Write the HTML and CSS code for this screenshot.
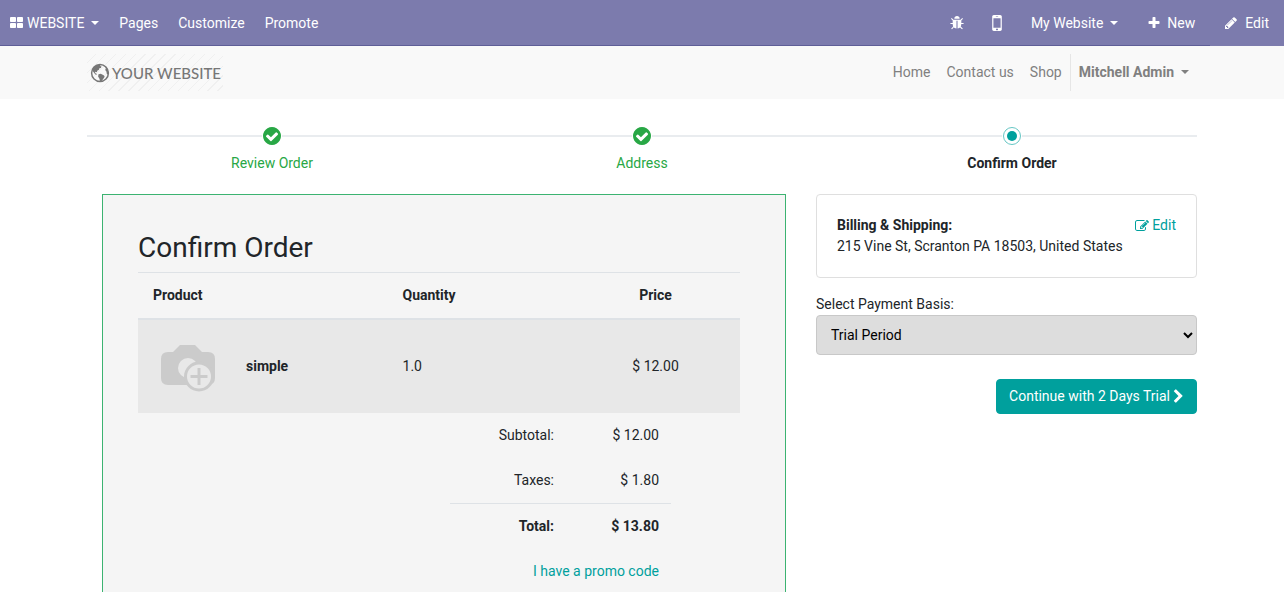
FILE: index.html
```html
<!DOCTYPE html>
<html lang="en">
<head>
<meta charset="utf-8">
<meta name="viewport" content="width=device-width, initial-scale=1">
<title>Confirm Order</title>
<link rel="stylesheet" href="styles.css">
</head>
<body>
<nav class="editor-bar">
  <div class="editor-main">
    <a class="editor-item editor-brand" href="#"><svg class="icon" viewBox="128 0 1792 1792"><path d="M832 1024v384q0 52-38 90t-90 38h-512q-52 0-90-38t-38-90v-384q0-52 38-90t90-38h512q52 0 90 38t38 90zm0-768v384q0 52-38 90t-90 38h-512q-52 0-90-38t-38-90v-384q0-52 38-90t90-38h512q52 0 90 38t38 90zm896 768v384q0 52-38 90t-90 38h-512q-52 0-90-38t-38-90v-384q0-52 38-90t90-38h512q52 0 90 38t38 90zm0-768v384q0 52-38 90t-90 38h-512q-52 0-90-38t-38-90v-384q0-52 38-90t90-38h512q52 0 90 38t38 90z" transform="translate(64 0)"/></svg><span class="caret">WEBSITE</span></a>
    <a class="editor-item" href="#">Pages</a>
    <a class="editor-item" href="#">Customize</a>
    <a class="editor-item" href="#">Promote</a>
    <div class="editor-tools">
      <button class="tool" type="button" aria-label="Debug"><svg class="icon" viewBox="64 64 1664 1664"><path d="M1696 960q0 26-19 45t-45 19h-224q0 171-67 290l208 209q19 19 19 45t-19 45q-18 19-45 19t-45-19l-198-197q-5 5-15 13t-42 28.500-65 36.500-82 29-97 13v-896h-128v896q-51 0-101.500-13.500t-87-33-66-39-43.500-32.500l-15-14-183 207q-20 21-48 21-24 0-43-16-19-18-20.500-44.500t15.500-46.500l202-227q-58-114-58-274h-224q-26 0-45-19t-19-45 19-45 45-19h224v-294l-173-173q-19-19-19-45t19-45 45-19 45 19l173 173h844l173-173q19-19 45-19t45 19 19 45-19 45l-173 173v294h224q26 0 45 19t19 45zm-480-576h-640q0-133 93.500-226.500t226.500-93.500 226.500 93.500 93.500 226.500z"/></svg></button>
      <button class="tool tool-mobile" type="button" aria-label="Mobile preview"><svg class="icon-mobile" viewBox="512 256 768 1280"><path d="M976 1408q0-33-23.500-56.500t-56.500-23.500-56.500 23.500-23.500 56.500 23.500 56.500 56.500 23.500 56.500-23.500 23.500-56.500zm208-160v-704q0-13-9.500-22.500t-22.500-9.500h-512q-13 0-22.500 9.500t-9.500 22.500v704q0 13 9.500 22.500t22.500 9.500h512q13 0 22.500-9.500t9.500-22.500zm-192-848q0-16-16-16h-160q-16 0-16 16t16 16h160q16 0 16-16zm288-16v1024q0 52-38 90t-90 38h-512q-52 0-90-38t-38-90v-1024q0-52 38-90t90-38h512q52 0 90 38t38 90z"/></svg></button>
      <a class="tool tool-site" href="#"><span class="caret">My Website</span></a>
      <a class="tool" href="#"><svg class="icon" viewBox="0 0 1792 1792"><path d="M1600 736v192q0 40-28 68t-68 28h-416v416q0 40-28 68t-68 28h-192q-40 0-68-28t-28-68v-416h-416q-40 0-68-28t-28-68v-192q0-40 28-68t68-28h416v-416q0-40 28-68t68-28h192q40 0 68 28t28 68v416h416q40 0 68 28t28 68z"/></svg>New</a>
    </div>
  </div>
  <a class="tool tool-edit" href="#"><svg class="icon" viewBox="0 0 1792 1792"><path d="M491 1536l91-91-235-235-91 91v107h128v128h107zm523-928q0-22-22-22-10 0-17 7l-542 542q-7 7-7 17 0 22 22 22 10 0 17-7l542-542q7-7 7-17zm-54-192l416 416-832 832h-416v-416zm683 96q0 53-37 90l-166 166-416-416 166-165q36-38 90-38 53 0 91 38l235 234q37 39 37 91z"/></svg>Edit</a>
</nav>

<header class="site-header">
  <div class="container header-row">
    <a class="logo" href="#"><svg class="globe" viewBox="0 0 20 20"><circle cx="10" cy="10" r="8.400" fill="none" stroke="currentColor" stroke-width="1.500"/><path d="M3.200 4.800Q6 1.600 10.500 1.600L10.200 3l1.300.6-.6 1.400-1.600.3-.3 1.500-1.800 1-.2 1.400-1.500-.4-.6 1.300 1.300.5.8 1.200-1.600-.3L2.800 8.200 2 6.800zM8.500 11.200l2.200-.4 3 1.500 1 1.400-1.200 1.800-1.800 2.500-1.800.7-.3-2.800-1.500-2.300zM15.200 3.600l1.800 1.800 1.400 3.200-.2 3.200-1.400-1-.4-2.200-1.200-1.600.6-1.600z"/></svg>YOUR WEBSITE</a>
    <nav class="site-nav">
      <a href="#">Home</a>
      <a href="#">Contact us</a>
      <a href="#">Shop</a>
      <a class="user" href="#"><span class="caret">Mitchell Admin</span></a>
    </nav>
  </div>
</header>

<main class="container">
  <ol class="steps">
    <li class="step done"><a href="#"><svg class="marker" viewBox="128 128 1536 1536"><path d="M1412 734q0-28-18-46l-91-90q-19-19-45-19t-45 19l-408 407-226-226q-19-19-45-19t-45 19l-91 90q-18 18-18 46 0 27 18 45l362 362q19 19 45 19 27 0 46-19l543-543q18-18 18-45zm252 162q0 209-103 385.500t-279.500 279.500-385.500 103-385.500-103-279.500-279.500-103-385.500 103-385.500 279.500-279.500 385.500-103 385.500 103 279.500 279.500 103 385.500z"/></svg>Review Order</a></li>
    <li class="step done"><a href="#"><svg class="marker" viewBox="128 128 1536 1536"><path d="M1412 734q0-28-18-46l-91-90q-19-19-45-19t-45 19l-408 407-226-226q-19-19-45-19t-45 19l-91 90q-18 18-18 46 0 27 18 45l362 362q19 19 45 19 27 0 46-19l543-543q18-18 18-45zm252 162q0 209-103 385.500t-279.500 279.500-385.500 103-385.500-103-279.500-279.500-103-385.500 103-385.500 279.500-279.500 385.500-103 385.500 103 279.500 279.500 103 385.500z"/></svg>Address</a></li>
    <li class="step current"><a href="#"><svg class="marker" viewBox="0 0 18 18"><circle cx="9" cy="9" r="8.500" fill="#fff" stroke="#66c6c4"/><circle cx="9" cy="9" r="5" fill="#00a09d"/></svg>Confirm Order</a></li>
  </ol>

  <div class="checkout">
    <section class="order">
      <h3>Confirm Order</h3>
      <table class="products">
        <colgroup><col class="col-image"><col class="col-name"><col class="col-qty"><col class="col-price"></colgroup>
        <thead><tr><th class="product-head" colspan="2">Product</th><th>Quantity</th><th class="price">Price</th></tr></thead>
        <tbody><tr>
          <td class="image"><svg class="photo" viewBox="-1 -1 64 64"><path d="M15 16h2l7-7h15l7 7h6q7 0 7 7v19q0 7-7 7H12q-7 0-7-7V23q0-7 7-7z" fill="#cbcbcb"/><circle cx="32" cy="32" r="10" fill="#e8e8e8"/><circle cx="43" cy="40.500" r="15" fill="#cbcbcb"/><circle cx="43" cy="40.500" r="12" fill="#e8e8e8"/><path d="M41.500 32h3v7h7v3h-7v7h-3v-7h-7v-3h7z" fill="#cbcbcb"/></svg></td>
          <td><strong>simple</strong></td><td>1.0</td><td class="price">$ 12.00</td>
        </tr></tbody>
      </table>
      <table class="totals">
        <tbody>
          <tr><td class="total-label">Subtotal:</td><td>$ 12.00</td></tr>
          <tr><td>Taxes:</td><td>$ 1.80</td></tr>
          <tr class="grand"><th>Total:</th><th>$ 13.80</th></tr>
          <tr><td colspan="2"><a href="#">I have a promo code</a></td></tr>
        </tbody>
      </table>
    </section>

    <aside class="payment">
      <div class="card">
        <a class="card-edit" href="#"><svg class="icon" viewBox="0 0 1792 1792"><path d="M888 1184l116-116-152-152-116 116v56h96v96h56zm440-720q-16-16-33 1l-350 350q-17 17-1 33t33-1l350-350q17-17 1-33zm80 594v190q0 119-84.500 203.500t-203.500 84.500h-832q-119 0-203.500-84.500t-84.500-203.500v-832q0-119 84.500-203.500t203.500-84.500h832q63 0 117 25 15 7 18 23 3 17-9 29l-49 49q-14 14-32 8-23-6-45-6h-832q-66 0-113 47t-47 113v832q0 66 47 113t113 47h832q66 0 113-47t47-113v-126q0-13 9-22l64-64q15-15 35-7t20 29zm-96-738l288 288-672 672h-288v-288zm444 132l-92 92-288-288 92-92q28-28 68-28t68 28l152 152q28 28 28 68t-28 68z"/></svg>Edit</a>
        <strong>Billing &amp; Shipping:</strong>
        <div>215 Vine St, Scranton PA 18503, United States</div>
      </div>
      <label for="basis">Select Payment Basis:</label>
      <select id="basis"><option>Trial Period</option></select>
      <button class="continue" type="button">Continue with 2 Days Trial<svg class="icon-chevron" viewBox="256 0 1280 1792"><path d="M1363 877l-742 742q-19 19-45 19t-45-19l-166-166q-19-19-19-45t19-45l531-531-531-531q-19-19-19-45t19-45l166-166q19-19 45-19t45 19l742 742q19 19 19 45t-19 45z"/></svg></button>
    </aside>
  </div>
</main>
</body>
</html>
```

FILE: styles.css
```css
*, *::before, *::after { box-sizing: border-box; }

body {
  margin: 0;
  background: #fff;
  color: #212529;
  font: 14px/21px Roboto, "Liberation Sans", sans-serif;
}

a { color: #00a09d; text-decoration: none; }
svg { fill: currentColor; flex: none; }
strong, th { font-weight: 700; }
.icon { width: 14px; height: 14px; }
.icon-mobile { width: 10px; height: 16px; }
.icon-chevron { width: 11px; height: 15px; }

.caret { display: inline-flex; align-items: center; }
.caret::after {
  content: "";
  margin: -1px 0 0 7px;
  border: 4px solid transparent;
  border-top-color: currentColor;
  border-bottom: 0;
}

/* Editor bar */
.editor-bar { display: flex; height: 46px; background: #7c7bad; }
.editor-main { display: flex; flex: 1; border-bottom: 1px solid #5f5e97; }
.editor-item, .tool {
  display: flex;
  align-items: center;
  padding: 1px 10px 0;
  border: 0;
  background: none;
  color: #fff;
  font: inherit;
}
.editor-brand { gap: 3px; }
.editor-tools { display: flex; margin-left: auto; }
.tool { padding: 1px 15px 0 12px; gap: 6px; }
.tool-mobile { padding: 1px 16px 0 13px; }
.tool-site { padding: 1px 17px 0 13px; }
.tool-edit { padding: 0 15px 0 14px; gap: 7px; }

/* Site header */
.container { width: 100%; max-width: 1140px; margin: 0 auto; padding: 0 15px; }
.site-header { background: #f9f9f9; padding: 8px 0; }
.header-row { display: flex; justify-content: space-between; }
.logo {
  display: flex;
  align-items: center;
  gap: 2px;
  height: 37px;
  padding: 0 2px 0 3px;
  color: #777;
  font: 500 15px/36px Lato, sans-serif;
  background: repeating-linear-gradient(135deg, #f9f9f9 0 6px, #f0f0f0 6px 7px);
}
.globe { width: 20px; height: 20px; }
.site-nav { display: flex; }
.site-nav a { display: flex; align-items: center; padding: 0 8px; color: #808080; }
.site-nav .user { border-left: 1px solid #e6e6e6; font-weight: 700; }

/* Checkout progress */
.steps {
  display: grid;
  grid-template-columns: repeat(3, 1fr);
  margin: 0;
  padding: 27px 0 20px;
  list-style: none;
  text-align: center;
}
.step { background: linear-gradient(#e9ecef, #e9ecef) 0 9px / 100% 2px no-repeat; }
.step a { display: flex; flex-direction: column; align-items: center; gap: 7px; }
.marker { width: 20px; height: 20px; padding: 1px; background: #fff; }
.done a { color: #28a745; }
.current a { color: #212529; font-weight: 700; }

/* Order summary */
.checkout { display: grid; grid-template-columns: 684fr 381fr; gap: 30px; padding-left: 15px; }
.order { padding: 36px 45px 36px 35px; border: 1px solid #3cb371; background: #f5f5f5; }
.order h3 { margin: 0 0 7px; font-size: 28px; line-height: 34px; font-weight: 400; }
table { border-collapse: collapse; }
th, td { padding: 12px; }
.products { width: 100%; table-layout: fixed; text-align: left; }
.col-image { width: 96px; }
.col-name { width: 26%; }
.col-qty { width: 30%; }
.products thead { border-top: 1px solid #dee2e6; border-bottom: 2px solid #dee2e6; }
.products .product-head { padding-left: 15px; }
.products tbody { background: #e8e8e8; }
.products .image { padding: 15px 17px 14px; }
.products .price { text-align: center; }
.photo { display: block; width: 64px; height: 64px; }
.totals { width: 221px; margin: 0 69px 0 auto; text-align: right; }
.total-label { width: 116px; }
.grand { border-top: 1px solid #dee2e6; }

/* Payment column */
.payment { display: flex; flex-direction: column; }
.card { margin-bottom: 16px; padding: 20px; border: 1px solid #dfdfdf; border-radius: 4px; }
.card-edit { display: flex; float: right; align-items: center; gap: 3px; }
.payment select {
  width: 100%;
  height: 40px;
  padding: 0 0 0 10px;
  border: 1px solid #c8c8c8;
  border-radius: 4px;
  background-color: #ddd;
  color: #000;
  font: inherit;
}
.continue {
  display: flex;
  align-items: center;
  align-self: flex-end;
  gap: 3px;
  margin-top: 24px;
  padding: 6px 12px;
  border: 1px solid #00a09d;
  border-radius: 4px;
  background: #00a09d;
  color: #fff;
  font: inherit;
}
```
